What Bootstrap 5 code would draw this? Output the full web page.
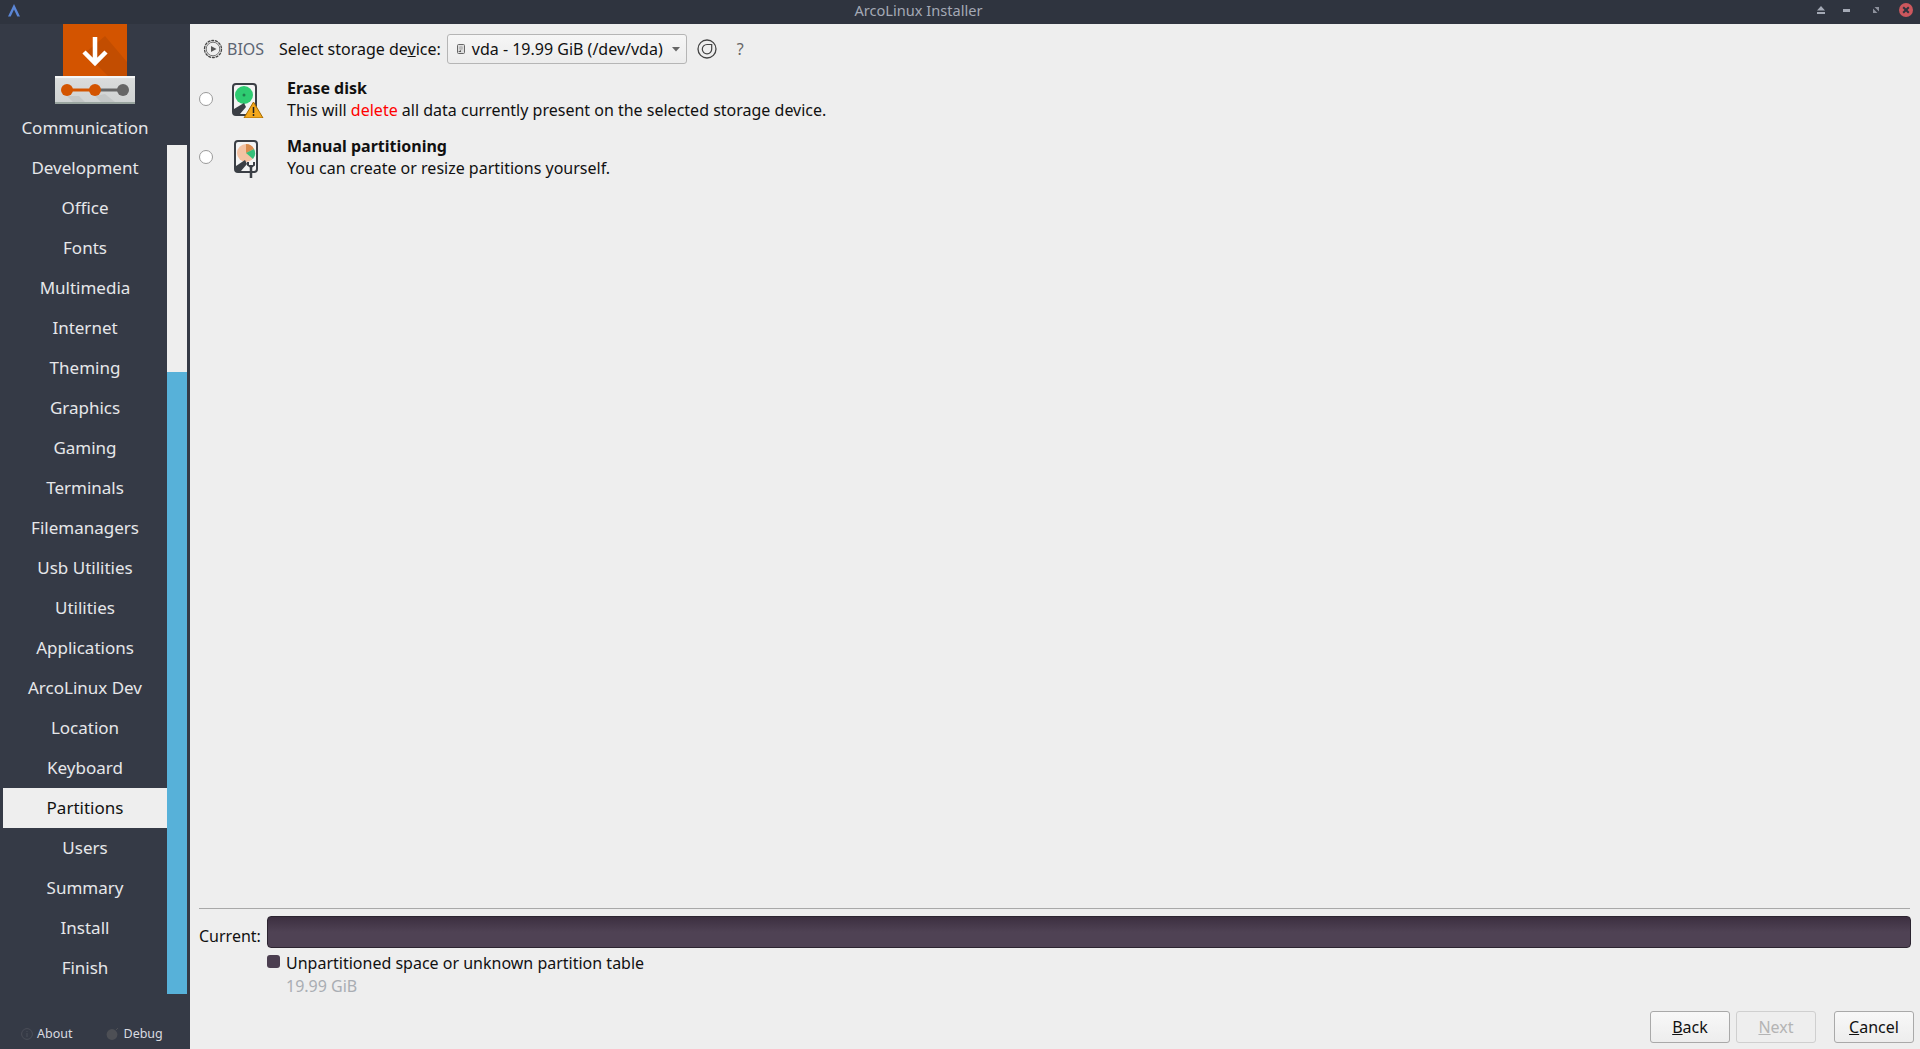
<!doctype html>
<html lang="en"><head><meta charset="utf-8"><title>ArcoLinux Installer</title>
<link href="https://cdn.jsdelivr.net/npm/bootstrap@5.3.0/dist/css/bootstrap.min.css" rel="stylesheet">
<style>
html,body{height:100%;overflow:hidden}
body{font-family:"Noto Sans",sans-serif;font-size:16px;background:#eee;color:#111;line-height:22px}
.titlebar{height:24px;background:#2f343f;color:#a4a9b5;font-size:14.6px;padding:0 7px 4px 8px}
.ttl{line-height:19px}
.shell{height:1025px}
.side{width:190px;background:#353a46;color:#e6e7ea}
.logobox{height:84px;padding-left:55px}
.sidenav{height:902px}
.navcol{width:164px;margin-left:3px}
.navitem{height:40px;font-size:17px;line-height:40px;text-align:center}
.navitem.on{background:#eee;color:#111}
.scroller{width:20px;margin-top:37px;background:#57b1d9;height:849px}
.scroller i{display:block;height:227px;background:#eee}
.sidefoot{height:39px;font-size:12.5px;color:#d9dbe0;padding-left:21px;padding-top:9px}
.sidefoot span{width:94px}
.main{padding:0 6px 0 9px;min-width:0}
.toprow{height:46px;padding-left:1px;padding-top:4px}
.bios{color:#5d6673;margin-left:4px;width:52px}
.combo{width:240px;height:30px;margin-left:6px;border:1px solid #b5b5b5;border-radius:3px;background:linear-gradient(#f6f6f6,#ececec);padding:0 6px 0 9px}
.optrow{height:58px}
.radiodot{width:14px;height:14px;border:1px solid #9a9a9a;border-radius:50%;background:#fff;margin-right:17px;flex:none}
.opticon{width:38px;margin-right:19px;flex:none}
.opt-b{font-weight:700;color:#111}
.del{color:#f00}
.spacer-f{flex:1}
.rule{height:1px;background:#a8a8a8;margin-right:4px}
.currow{margin-top:7px;padding-right:3px}
.curlabel{width:68px;padding-top:9px}
.pbar{height:32px;background:linear-gradient(#3c2f40,#4f4254 50%,#4f4254);border:1px solid #2c2430;border-radius:4px}
.swatch{width:13px;height:13px;border-radius:3px;background:#4b3e50;margin:3px 6px 0 0;flex:none}
.legendrow{padding-left:68px;margin-top:4px;height:54px}
.size{color:#a9adb3;margin-top:1px}
.actions{height:43px;margin-right:0;padding-bottom:6px}
.gbtn{width:80px;height:32px;border:1px solid #a9a9a9;border-radius:3px;background:linear-gradient(#f8f8f8,#ededed);font-size:16px;line-height:28px;padding:0;color:#111;text-align:center}
.gbtn.off{color:#b4b4b4;border-color:#cfcfcf;background:#eee}
.helpq{color:#666;margin-left:20px}
.ms-next{margin-left:6px}
.ms-cancel{margin-left:18px}
.wgap1{margin-left:18px}.wgap2{margin-left:23px}.wgap3{margin-left:20px}
.combo-ic{margin-right:7px}
.debug-ic{margin-right:5px}
.refresh-ic{margin-left:10px}
.bios-ic{margin-left:3px}
</style></head><body>
<div class="titlebar d-flex align-items-center">
<svg width="12" height="13" viewBox="0 0 12 13"><path d="M6 0 L12 12.500 H9.300 L6 5.500 L2.700 12.500 H0 Z" fill="#5b86d6"/></svg>
<div class="ttl flex-grow-1 text-center">ArcoLinux Installer</div>
<div class="d-flex align-items-center">
<svg width="8" height="8" viewBox="0 0 8 8"><path d="M4 0 L8 4.500 H0Z M0 6 H8 V8 H0Z" fill="#a4a9b5"/></svg>
<svg class="wgap1" width="7" height="3" viewBox="0 0 7 3"><path d="M0 0 H7 V3 H0Z" fill="#a4a9b5"/></svg>
<svg class="wgap2" width="6" height="6" viewBox="0 0 6 6"><path d="M0 1.500 L4.500 6 H0Z M6 4.500 L1.500 0 H6Z" fill="#8d919c"/></svg>
<svg class="wgap3" width="14" height="14" viewBox="0 0 14 14"><circle cx="7" cy="7" r="7" fill="#cc575d"/><path d="M4.200 4.200 L9.800 9.800 M9.800 4.200 L4.200 9.800" stroke="#2f343f" stroke-width="2"/></svg>
</div></div>
<div class="shell d-flex">
<aside class="side d-flex flex-column flex-none">
<div class="logobox">
<svg width="80" height="80" viewBox="0 0 80 80"><rect x="8" width="64" height="52" fill="#d35400"/><path d="M40 39 L30 29 L50 12 L72 38 V52 H53Z" fill="#b84a02" opacity=".6"/><path d="M40 13 V38 M29 28 L40 39 L51 28" stroke="#fff" stroke-width="4.500" fill="none"/><defs><linearGradient id="tray" x1="0" y1="0" x2="0" y2="1"><stop offset="0" stop-color="#eef0f0"/><stop offset=".1" stop-color="#dadcdc"/><stop offset="1" stop-color="#cfd2d2"/></linearGradient></defs><rect y="52" width="80" height="28" fill="url(#tray)"/><rect y="52" width="80" height="2" fill="#f5f6f6"/><rect y="78" width="80" height="2" fill="#9aa5a0"/><path d="M12 72 L18 78 H30 L24 72Z M40 72 L46 78 H60 L50 70Z" fill="#b8bbbb" opacity=".5"/><path d="M12 66 H40" stroke="#d35400" stroke-width="3"/><path d="M40 66 H68" stroke="#666" stroke-width="3"/><circle cx="12" cy="66" r="6" fill="#d35400"/><circle cx="40" cy="66" r="6" fill="#d35400"/><circle cx="68" cy="66" r="6" fill="#666"/></svg>
</div>
<div class="sidenav d-flex">
<div class="navcol">
<div class="navitem">Communication</div><div class="navitem">Development</div><div class="navitem">Office</div><div class="navitem">Fonts</div><div class="navitem">Multimedia</div><div class="navitem">Internet</div><div class="navitem">Theming</div><div class="navitem">Graphics</div><div class="navitem">Gaming</div><div class="navitem">Terminals</div><div class="navitem">Filemanagers</div><div class="navitem">Usb Utilities</div><div class="navitem">Utilities</div><div class="navitem">Applications</div><div class="navitem">ArcoLinux Dev</div><div class="navitem">Location</div><div class="navitem">Keyboard</div><div class="navitem on">Partitions</div><div class="navitem">Users</div><div class="navitem">Summary</div><div class="navitem">Install</div><div class="navitem">Finish</div>
</div>
<div class="scroller"><i></i></div>
</div>
<div class="sidefoot d-flex align-items-center">
<span class="d-flex align-items-center"><svg width="12" height="12" class="me-1" viewBox="0 0 12 12"><circle cx="6" cy="6" r="5.400" fill="none" stroke="#4a4e58"/><path d="M6 5 V9 M6 3 V4" stroke="#4a4e58"/></svg>About</span>
<span class="d-flex align-items-center"><svg class="debug-ic" width="13" height="12" viewBox="0 0 13 12"><circle cx="6" cy="6.500" r="5.400" fill="#4d4f55"/><path d="M10 2 L12 0" stroke="#4d4f55"/></svg>Debug</span>
</div>
</aside>
<main class="main flex-grow-1 d-flex flex-column">
<div class="toprow d-flex align-items-center">
<svg class="bios-ic" width="20" height="20" viewBox="0 0 20 20"><circle cx="10" cy="10" r="8.500" fill="none" stroke="#444" stroke-width="1.300" stroke-dasharray="3 .8"/><circle cx="10" cy="10" r="6.800" fill="none" stroke="#555" stroke-width=".8"/><path d="M8 7 L13.500 10 L8 13Z" fill="#555"/></svg>
<span class="bios">BIOS</span>
<span>Select storage de<u>v</u>ice:</span>
<div class="combo d-flex align-items-center justify-content-between"><span class="d-flex align-items-center"><svg class="combo-ic" width="8" height="10" viewBox="0 0 8 10"><rect x=".5" y=".5" width="7" height="9" rx="1" fill="#ddd" stroke="#666"/><circle cx="4" cy="4" r="2" fill="#bbb"/><path d="M1 8 L4 6 V8Z" fill="#555"/></svg>vda - 19.99 GiB (/dev/vda)</span><svg width="8" height="5" viewBox="0 0 8 5"><path d="M0 0H8L4 4.500Z" fill="#666"/></svg></div>
<svg class="refresh-ic" width="20" height="20" viewBox="0 0 20 20"><circle cx="10" cy="10" r="9" fill="none" stroke="#444" stroke-width="1.300"/><path d="M10 5.500 A4.700 4.700 0 1 0 14.700 10 M10 5.500 H14.700 V10" fill="none" stroke="#444" stroke-width="1.200"/></svg>
<span class="helpq">?</span>
</div>
<div class="optrow d-flex align-items-center">
<span class="radiodot"></span>
<svg class="opticon" width="38" height="38" viewBox="0 0 38 38"><rect x="3" y="4" width="23" height="31" rx="3" fill="#f4f4f4" stroke="#3b3f45" stroke-width="2"/><circle cx="14" cy="15" r="9" fill="#2ecc71"/><circle cx="14" cy="15" r="1.500" fill="#1f7f4c"/><path d="M4 29 L14 23 L16 27 L10 34 H4Z" fill="#3b3f45"/><path d="M23.500 22 L33 38 H14Z" fill="#f4a81c" stroke="#a56a00"/><path d="M23.500 27 V33 M23.500 34 V36" stroke="#222" stroke-width="1.500"/></svg>
<div class="opt-t"><div class="opt-b">Erase disk</div><div>This will <span class="del">delete</span> all data currently present on the selected storage device.</div></div>
</div>
<div class="optrow d-flex align-items-center">
<span class="radiodot"></span>
<svg class="opticon" width="38" height="42" viewBox="0 0 38 42"><rect x="5" y="5" width="22" height="31" rx="3" fill="#f4f4f4" stroke="#3b3f45" stroke-width="2"/><circle cx="16" cy="17" r="9" fill="#f4c3a3"/><path d="M16 17 L16 8 A9 9 0 0 1 24 13Z" fill="#d98c4e"/><path d="M16 17 L24 13 A9 9 0 0 1 23 23Z" fill="#35c07a"/><path d="M6 30 L15 24 L17 28 L11 35 H6Z" fill="#3b3f45"/><path d="M21 29 V42" stroke="#3b3f45" stroke-width="2.500"/><path d="M18 26 V29 L21 31 L24 29 V26" fill="none" stroke="#3b3f45" stroke-width="2"/></svg>
<div class="opt-t"><div class="opt-b">Manual partitioning</div><div>You can create or resize partitions yourself.</div></div>
</div>
<div class="spacer-f"></div>
<div class="rule"></div>
<div class="currow d-flex"><div class="curlabel">Current:</div><div class="pbar flex-grow-1"></div></div>
<div class="legendrow d-flex"><span class="swatch"></span><div><div>Unpartitioned space or unknown partition table</div><div class="size">19.99 GiB</div></div></div>
<div class="actions d-flex justify-content-end align-items-end">
<button class="gbtn btn"><u>B</u>ack</button>
<button class="gbtn btn off ms-next"><u>N</u>ext</button>
<button class="gbtn btn ms-cancel"><u>C</u>ancel</button>
</div>
</main>
</div>
<script src="https://cdn.jsdelivr.net/npm/bootstrap@5.3.0/dist/js/bootstrap.bundle.min.js"></script>
</body></html>
